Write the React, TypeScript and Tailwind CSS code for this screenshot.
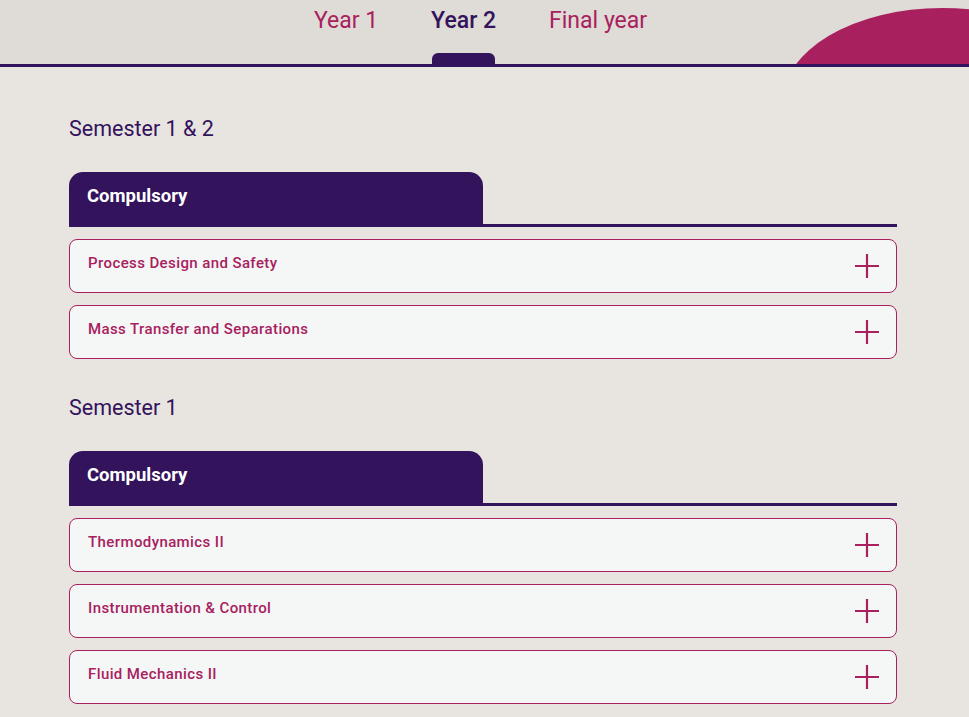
import React from "react";

const font = { fontFamily: '"Roboto", "Liberation Sans", sans-serif' };

function Plus() {
  return (
    <svg width="24" height="24" viewBox="0 0 24 24" className="shrink-0">
      <path d="M12 0V24M0 12H24" stroke="#a8215e" strokeWidth="2.2" fill="none" />
    </svg>
  );
}

function Module({ name }: { name: string }) {
  return (
    <div className="flex h-[54px] items-center justify-between rounded-lg border border-[#a8215e] bg-[#f5f7f7] pl-[18px] pr-[17px]">
      <span className="-mt-[5px] text-[15px] font-medium tracking-[0.4px] text-[#a8215e]">{name}</span>
      <Plus />
    </div>
  );
}

function Semester({ title, modules }: { title: string; modules: string[] }) {
  return (
    <section>
      <h2 className="text-[21.5px] leading-[28px] text-[#33135c]">{title}</h2>
      <div className="mt-[29px] flex items-end">
        <div className="flex h-[55px] w-[414px] items-center rounded-t-[14px] bg-[#33135c] px-[18px]">
          <span className="-mt-[5px] text-[18.5px] font-bold text-white">Compulsory</span>
        </div>
        <div className="h-[3px] flex-1 bg-[#33135c]" />
      </div>
      <div className="mt-[12px] flex flex-col gap-[12px]">
        {modules.map((m) => (
          <Module key={m} name={m} />
        ))}
      </div>
    </section>
  );
}

export default function App() {
  return (
    <div className="min-h-[717px] bg-[#e8e4e0]" style={font}>
      <header className="relative h-[67px] overflow-hidden border-b-[3px] border-[#33135c] bg-[#dfdbd6]">
        <div className="absolute left-[782px] top-[8px] h-[190px] w-[320px] rounded-[50%] bg-[#a8215e]" />
        <nav className="relative flex h-full justify-center gap-[53px] pr-[8px]">
          {["Year 1", "Year 2", "Final year"].map((y, i) => (
            <div key={y} className="flex flex-col items-center">
              <span
                className={
                  "mt-[5px] text-[23px] leading-[32px] " +
                  (i === 1 ? "font-medium text-[#33135c]" : "text-[#a8215e]")
                }
              >
                {y}
              </span>
              {i === 1 && <div className="mt-auto h-[11px] w-[63px] rounded-t-[6px] bg-[#33135c]" />}
            </div>
          ))}
        </nav>
      </header>
      <main className="flex flex-col gap-[35px] pl-[69px] pr-[72px] pt-[48px]">
        <Semester title="Semester 1 & 2" modules={["Process Design and Safety", "Mass Transfer and Separations"]} />
        <Semester
          title="Semester 1"
          modules={["Thermodynamics II", "Instrumentation & Control", "Fluid Mechanics II"]}
        />
      </main>
    </div>
  );
}
